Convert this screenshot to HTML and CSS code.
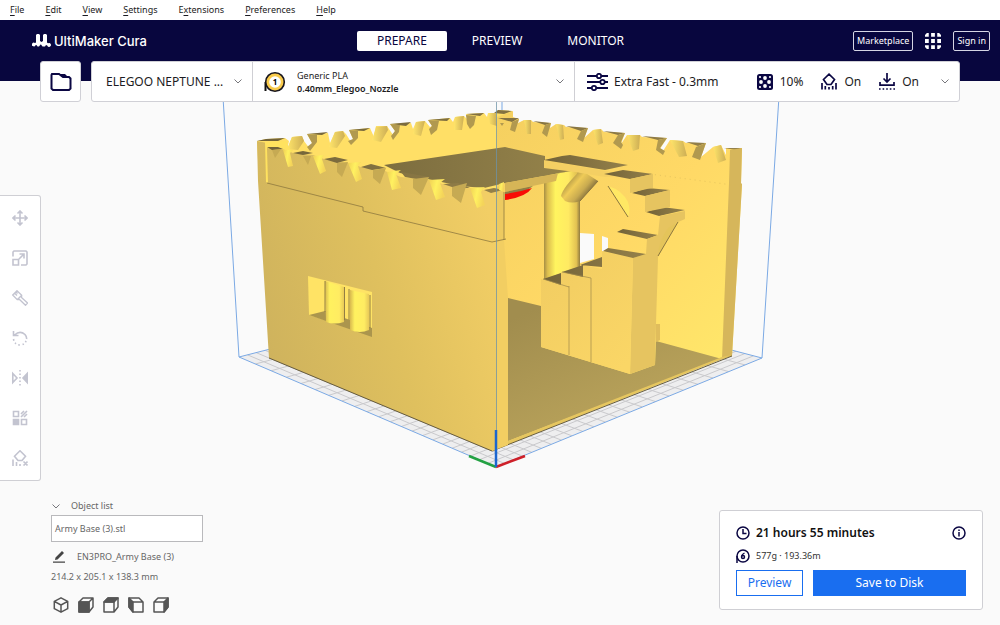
FILE: index.html
```html
<!DOCTYPE html>
<html lang="en">
<head>
<meta charset="utf-8">
<title>UltiMaker Cura</title>
<link rel="stylesheet" href="styles.css">
</head>
<body>
<nav class="menu" aria-label="Main menu">
  <button><u>F</u>ile</button><button><u>E</u>dit</button><button><u>V</u>iew</button><button><u>S</u>ettings</button><button>E<u>x</u>tensions</button><button><u>P</u>references</button><button><u>H</u>elp</button>
</nav>
<header class="top">
  <div class="brand">
    <svg width="19" height="13" viewBox="0 0 19 13" fill="#fff"><path d="M5 0h2l1 1v6l1.500 1L11 7V1l1-1h2l1 1v7.500l1 .8a1.900 1.900 0 1 1-.8 2.200l-1.200-.5-1 1.500h-2.500l-1.500-2H8.500l-1.500 2H5.500l-1-1.500-1 .3a1.900 1.900 0 1 1-.5-2.300L4 8.500V1z"/></svg>
    <span>UltiMaker Cura</span>
  </div>
  <div class="tabs">
    <button class="tab active">PREPARE</button><button class="tab">PREVIEW</button><button class="tab">MONITOR</button>
  </div>
  <div class="account">
    <button class="outline">Marketplace</button>
    <button class="apps" aria-label="Applications"><svg width="16" height="16" viewBox="0 0 17 17" fill="#fff"><path d="M2 0h2v4H0V2zM6.500 0h4v4h-4zM13 0h2l2 2v2h-4zM0 6.500h4v4H0zM6.500 6.500h4v4h-4zM13 6.500h4v4h-4zM0 13h4v4H2l-2-2zM6.500 13h4v4h-4zM13 13h4v2l-2 2h-2z"/></svg></button>
    <button class="outline">Sign in</button>
  </div>
</header>

<main class="stage">
  <svg class="scene" viewBox="0 81 1000 544" role="img" aria-label="Army Base model on the build plate">
    <defs>
      <linearGradient id="face" gradientUnits="userSpaceOnUse" x1="260" y1="320" x2="500" y2="250"><stop offset="0" stop-color="#cfb35d"/><stop offset=".5" stop-color="#dfc05e"/><stop offset="1" stop-color="#f2ce65"/></linearGradient>
      <linearGradient id="roof" x1="0" x2="1"><stop offset="0" stop-color="#7c6d3f"/><stop offset="1" stop-color="#95834a"/></linearGradient>
      <linearGradient id="inner" gradientUnits="userSpaceOnUse" x1="500" y1="120" x2="735" y2="340"><stop offset="0" stop-color="#f5d060"/><stop offset=".55" stop-color="#ffd966"/><stop offset="1" stop-color="#ffe66a"/></linearGradient>
      <linearGradient id="stair" gradientUnits="userSpaceOnUse" x1="540" y1="280" x2="630" y2="360"><stop offset="0" stop-color="#f2cd62"/><stop offset="1" stop-color="#fad666"/></linearGradient>
      <linearGradient id="floor" gradientUnits="userSpaceOnUse" x1="510" y1="320" x2="560" y2="430"><stop offset="0" stop-color="#a18d4e"/><stop offset="1" stop-color="#b6a059"/></linearGradient>
      <linearGradient id="pillar" x1="0" x2="1"><stop offset="0" stop-color="#a78f45"/><stop offset=".1" stop-color="#dcbd4e"/><stop offset=".32" stop-color="#fff45f"/><stop offset=".68" stop-color="#ffea62"/><stop offset=".9" stop-color="#e3c252"/><stop offset="1" stop-color="#917b40"/></linearGradient>
      <linearGradient id="column" x1="0" x2="1"><stop offset="0" stop-color="#d8b94f"/><stop offset=".25" stop-color="#fff15f"/><stop offset=".75" stop-color="#ffec62"/><stop offset="1" stop-color="#e8c958"/></linearGradient>
      <linearGradient id="brace" gradientUnits="userSpaceOnUse" x1="568" y1="179" x2="588" y2="196"><stop offset="0" stop-color="#ab9345"/><stop offset=".35" stop-color="#efcb57"/><stop offset=".7" stop-color="#c8aa50"/><stop offset="1" stop-color="#7b693a"/></linearGradient>
      <linearGradient id="step" x1="0" x2="1"><stop offset="0" stop-color="#716238"/><stop offset="1" stop-color="#95814a"/></linearGradient>
      <linearGradient id="tooth" x1="0" x2="1" y2=".3"><stop offset="0" stop-color="#f0d055"/><stop offset=".5" stop-color="#fff160"/><stop offset="1" stop-color="#f4d45a"/></linearGradient>
      <linearGradient id="peg" x1="0" x2="1"><stop offset="0" stop-color="#ffe56a"/><stop offset="1" stop-color="#cdae55"/></linearGradient>
      <clipPath id="plate"><path d="M239 357 501 290 762 358 496 467z"/></clipPath>
    </defs>
    <path d="M239 357 501 290 762 358 496 467z" fill="#eeeeef"/>
    <g id="grid" clip-path="url(#plate)" stroke="#c9c9cc" stroke-width="1"></g>
    <path d="M239 357 501 290 762 358 496 467zM222 81 239 357M780 81 762 358M502 81V115" fill="none" stroke="#7ba9e4"/>

    <!-- back walls -->
    <path fill="#ffdf66" d="M257 141 266 139 285 138 289 141 287 150 292 137 302 136 304 141 310 149 312 143 307 134 328 133 330 143 335 132 343 131 346 134 351 142 353 139 349 130 370 128 374 137 376 126 387 126 393 135 395 131 390 124 411 123 413 129 416 122 425 121 430 127 432 126 428 120 450 118 453 122 455 117 464 116 468 120 466 114 484 113 487 117 488 113 497 113 498 110 512 111 513 117 515 180 500 260 270 240 258 160z"/>
    <path fill="url(#inner)" d="M497 117 513 111 513 117 519 119 518 123 524 120 531 120 533 122 551 123 550 128 556 124 564 125 566 127 588 128 584 138 593 130 601 129 604 132 625 133 621 144 627 135 640 135 642 137 667 138 660 149 663 151 670 140 683 141 686 143 706 143 701 157 713 147 721 145 726 155 726 148 742 148 741 184 742 184 732 356 722 359 492 451 497 190z"/>
    <path fill="url(#step)" d="M257 141 266 139 285 138 278 141zM307 134 328 132 322 135zM349 130 370 128 364 131zM390 124 411 122 406 126zM428 120 450 118 447 121zM466 114 484 113 480 116zM494 113 498 110 512 111 504 114zM498 118 519 118 512 122zM533 121 551 123 545 125zM566 126 588 128 581 131zM603 131 625 133 618 135zM642 136 667 138 658 140zM686 142 706 143 698 146zM724 148 742 148 736 150z"/>
    <path fill="#b1994f" d="M307 134 317 135 317 142 310 151 307 147 312 143zM349 130 358 131 358 138 351 145 348 141 353 139zM390 124 400 125 399 132 393 140 391 136 395 131zM428 120 439 121 437 130 431 135 429 129 432 126zM466 115 476 116 474 125 470 129 467 124zM512 122 519 119 515 132 510 130zM545 125 551 123 547 137 542 133zM581 131 588 128 583 142 577 139zM618 135 625 133 621 142 623 145 621 149 613 143zM658 140 667 138 660 148 665 151 663 155 656 150zM696 147 706 143 700 160 692 157zM500 123 504 123 502 126z"/>
    <g fill="url(#peg)"><path d="M292 137 302 136 304 141 298 150 287 149z"/><path d="M335 132 343 131 345 136 337 148 329 147z"/><path d="M376 127 387 126 388 130 381 142 372 140z"/><path d="M416 122 425 121 421 136 413 134z"/><path d="M455 117 464 116 462 130 454 130z"/><path d="M488 113 496 113 497 126 490 124z"/><path d="M524 120 531 120 531 134 527 134z"/><path d="M556 124 563 125 564 139 560 140z"/><path d="M593 130 601 129 603 143 598 145z"/><path d="M627 135 640 135 639 149 633 151z"/><path d="M670 140 683 141 687 156 679 157z"/><path d="M713 147 721 145 726 160 718 163z"/></g>
    <path fill="#d6b65b" d="M730 150 742 148 741 183 742 184 732 356 722 359 729 183z"/>
    <path d="M650 174 740 186" stroke="#d9b95a" stroke-dasharray="1 4" opacity=".6"/>

    <!-- interior -->
    <path fill="url(#floor)" d="M508 298 541 306 541 347 630 374 655 365 656 341 722 359 508 441z"/>
    <path fill="#e6c65f" d="M508 441 722 357 732 355 492 451z"/>
    <path d="M492 451 732 356" stroke="#665b3c" fill="none"/>
    <path fill="#e0bd5c" d="M656 324h4v16l-4 2z"/>
    <path fill="#f2ce62" d="M497 189 504 190 504 240 508 298 508 445 492 451 496 240z"/>
    <path fill="#fafafa" d="M580 233 594 234V259L580 263zM602 236 608 238V249L602 252z"/>
    <path fill="url(#pillar)" d="M544 170H580V267L561 273 544 279z"/>
    <path fill="url(#brace)" d="M581 170 598 181 580 201Q572 204 565 201L561 196Q563 187 581 170z"/>
    <path fill="url(#roof)" d="M384 165 505 147 545 156 545 164 571 171 505 183 484 188 460 186 400 173z"/>
    <path fill="#d6b557" d="M505 183 571 171 558 173 556 181 505 192z"/>
    <path fill="#917d45" d="M505 192 533 186 526 191 505 198z"/><path fill="#f80d05" d="M505 194Q520 192 532 188 526 197 505 200z"/>
    <path fill="#f4cf63" d="M544 160 605 171 630 175 605 177 575 172 544 168z"/>
    <g fill="url(#step)"><path d="M544 160 562 156 570 155 628 165 605 170z"/><path d="M604 174 623 170 653 174 630 179z"/><path d="M632 193 647 188 670 190 645 196z"/><path d="M646 212 662 207 685 210 659 216z"/><path d="M617 232 623 229 658 235 647 239z"/></g>
    <path fill="#e6c460" d="M630 179 653 174V188L647 189 630 193zM645 196 670 190V207L645 212zM633 258 646 254 647 239 658 235 660 216 685 211 685 219 676 223 658 257 656 324 655 365 630 374z"/>
    <path fill="#ffe864" d="M608 186Q622 190 628 202 631 211 628 217z"/>
    <path fill="#e4c45a" d="M678 222 658 256Q658 242 668 228z"/>
    <path fill="none" stroke="#8b763f" d="M608 186 628 217M678 222 658 256M598 181 580 201"/>
    <path fill="url(#stair)" d="M541 279 561 284V272L583 277V265L602 269V251L633 258 630 374 541 347z"/>
    <path fill="url(#step)" d="M603 251 608 248 646 254 633 258zM580 265 602 257V267zM562 272 583 265V277zM543 279 561 273V285z"/>
    <path d="M569 286V355M591 278V362M562 272 591 278M543 279 569 287" stroke="#a18a4b" stroke-width=".7" fill="none"/>

    <!-- front left wall -->
    <path fill="url(#face)" d="M257 141 267 143 267 147 283 149 293 153 313 155 324 159 348 163 361 167 385 171 401 177 429 180 443 184 470 188 484 190 497 188 497 449 492 451 269 358 258 181z"/>
    <path fill="#edca60" d="M497 187 504 184 504 240 497 241z"/>
    <path fill="#ffe25f" d="M265 142 286 141 290 150 267 148 268 183 266 182z"/>
    <path fill="url(#step)" d="M267 147 278 147 283 149 272 150zM293 153 303 151 313 153 303 155zM324 159 335 157 348 160 337 163zM361 167 371 164 386 168 372 170zM401 172 429 177 422 180 405 177zM443 184 458 183 470 188 455 188zM484 190 494 188 503 190 491 193z"/>
    <path fill="#c6aa53" d="M272 150 281 149 275 158zM303 156 311 156 308 165zM337 163 348 162 342 177 337 172zM373 170 386 168 380 184 373 178zM413 179 429 177 421 195 413 188zM452 187 467 183 461 203 452 196z"/>
    <g fill="url(#tooth)"><path d="M283 150 293 150 290 153 293 166 288 167z"/><path d="M313 156 324 155 322 159 326 171 320 174z"/><path d="M348 163 361 162 358 166 362 179 356 182z"/><path d="M387 172 401 170 396 174 401 188 392 190z"/><path d="M429 180 445 179 440 183 445 197 436 200z"/><path d="M470 188 485 187 481 192 485 205 477 208z"/><path d="M499 184 504 182V192L499 190z"/></g>
    <path d="M267 183 363 207V211L492 242 506 239M504 192V240" fill="none" stroke="#8e783f" stroke-width=".8"/>
    <path d="M269 358 492 451" stroke="#665b3c"/>
    <!-- wall window -->
    <path fill="#ffe365" d="M308 276 372 292V335L309 315z"/>
    <path fill="#ab954d" d="M309 315 325 311 372 328 372 337z"/>
    <path fill="url(#column)" d="M325 281 344 287V322Q334 325 326 322z"/>
    <path fill="url(#column)" d="M350 290 369 294V330Q360 334 350 330z"/>
    <path d="M325 281V312M344.500 287V320M349 289V320M370 295V328" stroke="#927e43" stroke-width="1"/>
    <path d="M496.500 81V440" stroke="#6d93a8" opacity=".75"/>
    <path d="M469 456 496 467" stroke="#23a143" stroke-width="2.500"/><path d="M496 467 525 456" stroke="#ce2029" stroke-width="2.500"/><path d="M496 430V467" stroke="#1b66cf" stroke-width="2.500"/>
  </svg>

  <div class="toolbar">
    <button class="folder" aria-label="Open file"><svg width="22" height="18" viewBox="0 0 22 18" fill="none" stroke="#0b0743" stroke-width="2"><path d="M2 1h7l4 3h6l1.500 1.500v10L19 17H3l-1.500-1.500V2z"/><path d="M9 1h6l3 3h-6z" fill="#0b0743" stroke="none"/></svg></button>
    <div class="setup">
      <button class="cell printer"><span class="big">ELEGOO NEPTUNE ...</span><svg class="chev" viewBox="0 0 8 5"><path d="m.5.5 3.500 3.500L7.500.5"/></svg></button>
      <button class="cell material"><svg width="22" height="22" viewBox="0 0 22 22"><path d="M1.500 20V11" stroke="#111" stroke-width="2"/><circle cx="11" cy="11" r="9.300" fill="#f9cb4b" stroke="#17151e" stroke-width="1.600"/><circle cx="11" cy="11" r="5.800" fill="#fff"/><text x="11" y="14" text-anchor="middle" class="digit">1</text></svg><span class="stack"><span>Generic PLA</span><b>0.40mm_Elegoo_Nozzle</b></span><svg class="chev" viewBox="0 0 8 5"><path d="m.5.5 3.500 3.500L7.500.5"/></svg></button>
      <button class="cell settings">
        <svg width="21" height="18" viewBox="0 0 21 18" fill="none" stroke="#0b0743" stroke-width="1.800"><path d="M0 3h9.500M14.500 3H21M0 9h13M18 9h3M0 15h4.500M9.500 15H21"/><circle cx="12" cy="3" r="2.200"/><circle cx="15.500" cy="9" r="2.200"/><circle cx="7" cy="15" r="2.200"/></svg>
        <span class="big profile">Extra Fast - 0.3mm</span>
        <span class="stat"><svg width="16" height="16" viewBox="0 0 16 16"><rect width="16" height="16" rx="2.500" fill="#0b0743"/><g fill="#fff"><circle cx="8" cy="4" r="1.900"/><circle cx="4" cy="8" r="1.900"/><circle cx="12" cy="8" r="1.900"/><circle cx="8" cy="12" r="1.900"/><circle cx="3" cy="3" r="1.100"/><circle cx="13" cy="3" r="1.100"/><circle cx="3" cy="13" r="1.100"/><circle cx="13" cy="13" r="1.100"/></g></svg><span>10%</span></span>
        <span class="stat"><svg width="16" height="17" viewBox="0 0 16 17" fill="none" stroke="#0b0743" stroke-width="1.700"><path d="m8 1.200 5.500 5.300L10 11.500H6L2.500 6.500zM1 10v6.500M15 10v6.500M4.300 13v3.500M8 14v2.500M11.700 13v3.500"/></svg><span>On</span></span>
        <span class="stat"><svg width="16" height="17" viewBox="0 0 16 17" fill="none" stroke="#0b0743" stroke-width="1.700"><path d="M8 0v9M4.500 5.500 8 9l3.500-3.500M1 9v3.200h14V9"/><path d="M0 16h16" stroke-dasharray="1.600 2"/></svg><span>On</span></span>
        <svg class="chev" viewBox="0 0 8 5"><path d="m.5.5 3.500 3.500L7.500.5"/></svg>
      </button>
    </div>
  </div>

  <div class="tools" role="toolbar" aria-label="Model tools">
    <button aria-label="Move"><svg viewBox="0 0 16 16"><path d="M8 1v14M1 8h14M5.500 3.500 8 1l2.500 2.500M5.500 12.500 8 15l2.500-2.500M3.500 5.500 1 8l2.500 2.500M12.500 5.500 15 8l-2.500 2.500"/></svg></button>
    <button aria-label="Scale"><svg viewBox="0 0 16 16"><path d="M1 6.500V2l1-1h12l1 1v12l-1 1H9M1 9.500h5.500V15H1zM7 9l5-5M7.500 4H12v4.500"/></svg></button>
    <button aria-label="Paint"><svg viewBox="0 0 16 16"><path d="M5 .7 9.700 5.200 9.500 7.500 15.500 13l-2 2.300L7.500 9.500 5.200 9.700.7 5zM2.500 3l2.500 2.500M4 2l1.500 1.500M9.700 5.200 5.200 9.700" stroke-width="1.300"/></svg></button>
    <button aria-label="Rotate"><svg viewBox="0 0 16 16"><path d="M2.500 5Q8 0 13 4.500 15 7 14.500 9M1.500 1v4.500h5"/><path d="M1.500 9q1 6 6.500 6t6.500-6" stroke-dasharray="1.500 2.500"/></svg></button>
    <button aria-label="Mirror"><svg viewBox="0 0 16 16"><path d="M.8 3.500v9L5 8z"/><path d="M15.200 3.500v9L11 8z" fill="#c3c4d0"/><path d="M8 0v16" stroke-dasharray="1.500 2"/></svg></button>
    <button aria-label="Per model settings"><svg viewBox="0 0 16 16"><path d="M1.500 1.500h5v5h-5zM9.500 9.500h5v5h-5z"/><path d="M1.500 9.500h5v5h-5z" fill="#c3c4d0"/><path d="m9 4 3-3M9 7l6-6M12 7l3-3"/></svg></button>
    <button aria-label="Support blocker"><svg viewBox="0 0 16 16"><path d="m8 .8 5.500 5.400L10 10.500H6L2.500 6.200zM1 9.500V16M4.500 12v4M8 14v2M11.500 11.500l4 4M15.500 11.500l-4 4"/></svg></button>
  </div>

  <div class="bottom">
    <section class="objects">
      <button class="listhead"><svg class="chev" viewBox="0 0 8 5"><path d="m.5.5 3.500 3.500L7.500.5"/></svg><span>Object list</span></button>
      <button class="item">Army Base (3).stl</button>
      <div class="job"><button aria-label="Rename job"><svg width="12" height="12" viewBox="0 0 12 12" fill="#444"><path d="M9 0 11 2 4.500 8.500 2 9l.5-2.500zM0 10.500h12v1.200H0z"/></svg></button><span>EN3PRO_Army Base (3)</span></div>
      <p>214.2 x 205.1 x 138.3 mm</p>
      <div class="views">
        <button aria-label="3D view"><svg viewBox="0 0 16 16"><path d="m8 .8 6.700 3.500v7.400L8 15.200l-6.700-3.500V4.300zM1.300 4.300 8 8l6.700-3.700M8 8v7"/></svg></button>
        <button aria-label="Front view"><svg viewBox="0 0 16 16"><path d="M1 5 5 1h10v9l-4 5H1zM11 5l4-4M1 5h10v10"/><path d="M1 5h10v10H1z" fill="#555"/></svg></button>
        <button aria-label="Top view"><svg viewBox="0 0 16 16"><path d="M1 5 5 1h10v9l-4 5H1zM1 5h10v10"/><path d="M1 5 5 1h10l-4 4z" fill="#555"/></svg></button>
        <button aria-label="Left view"><svg viewBox="0 0 16 16"><path d="M1 1h10l4 4v10H5l-4-5zM5 5h10"/><path d="m1 1 4 4v10l-4-5z" fill="#555"/></svg></button>
        <button aria-label="Right view"><svg viewBox="0 0 16 16"><path d="M1 5 5 1h10v9l-4 5H1zM1 5h10"/><path d="m11 5 4-4v9l-4 5z" fill="#555"/></svg></button>
      </div>
    </section>
    <section class="card">
      <div class="line"><svg width="14" height="14" viewBox="0 0 14 14" fill="none" stroke="#0b0743" stroke-width="1.500"><circle cx="7" cy="7" r="6"/><path d="M7 3v4.500h3.500"/></svg><strong>21 hours 55 minutes</strong><button class="info" aria-label="Details"><svg width="14" height="14" viewBox="0 0 14 14" fill="none" stroke="#0b0743" stroke-width="1.500"><circle cx="7" cy="7" r="6"/><path d="M7 6v4.500M7 3.500V5"/></svg></button></div>
      <div class="line small"><svg width="14" height="14" viewBox="0 0 14 14" fill="none" stroke="#0b0743" stroke-width="1.500"><path d="M1 14V7"/><circle cx="7" cy="7" r="6"/><circle cx="7" cy="8" r="1.500"/><path d="M5.500 8q0-2.500 3-4" stroke-width="1.200"/></svg><span>577g · 193.36m</span></div>
      <div class="actions"><button class="preview">Preview</button><button class="save">Save to Disk</button></div>
    </section>
  </div>
</main>
<script src="grid.js"></script>
</body>
</html>
```
FILE: styles.css
```css
* { box-sizing: border-box; }
body { margin: 0; min-height: 100vh; display: flex; flex-direction: column; background: #fafafa; color: #1c1b22; font: 9px/14px "Noto Sans", sans-serif; }
button { margin: 0; padding: 0; border: 0; background: none; color: inherit; font: inherit; display: flex; align-items: center; }
svg { display: block; flex: none; }
p { margin: 0; }
.menu { display: flex; gap: 21px; height: 20px; padding: 0 10px; background: #fff; }
.menu button { display: block; }
.menu u { text-underline-offset: 2px; }
.top { display: grid; grid-template-columns: 1fr auto 1fr; align-items: center; height: 61px; padding: 0 10px 20px 32px; background: #08063e; color: #fff; }
.brand { display: flex; align-items: center; gap: 3px; font: 500 13px/20px Inter, sans-serif; }
.tabs { display: flex; gap: 5px; margin-left: -21px; }
.tab { height: 20px; padding: 0 20px; border-radius: 2px; font-size: 12px; }
.tab.active { background: #fff; color: #08063e; }
.account { display: flex; justify-content: flex-end; align-items: center; gap: 12px; }
.outline { height: 20px; padding: 0 3px; border: 1px solid #d5d5e4; border-radius: 2px; }

.stage { position: relative; flex: 1; display: flex; flex-direction: column; }
.scene { position: absolute; inset: 0; width: 100%; height: 100%; }
.toolbar { position: relative; display: flex; gap: 10px; height: 41px; margin: -20px 40px 0; }
.folder, .setup { background: #fff; border: 1px solid #d0d0d6; border-radius: 3px; }
.folder { width: 41px; justify-content: center; }
.setup { flex: 1; display: grid; grid-template-columns: 160fr 322fr 385fr; }
.cell { min-width: 0; white-space: nowrap; }
.cell + .cell { border-left: 1px solid #cfcfd4; }
.printer { padding: 0 10px 0 14px; }
.material { padding: 0 10px 0 11px; gap: 11px; }
.settings { padding: 0 10px 0 12px; }
.big, .stat { font-size: 12px; line-height: 18px; }
.profile { margin: 0 auto 0 6px; }
.stat { display: flex; align-items: center; gap: 7px; margin-right: 18px; }
.stack { display: flex; flex-direction: column; text-align: left; line-height: 13px; }
.stack b { font-weight: 600; }
.digit { font: 700 8px "Noto Sans", sans-serif; }
.chev { width: 8px; height: 5px; margin-left: auto; fill: none; stroke: #77777c; }
.settings .chev { margin-left: 4px; }

.tools { position: relative; align-self: flex-start; display: flex; flex-direction: column; gap: 24px; margin-top: 93px; padding: 14px 12px; background: #fff; border: 1px solid #cfcfd4; border-left: 0; border-radius: 0 3px 3px 0; }
.tools svg { width: 16px; height: 16px; fill: none; stroke: #c3c4d0; stroke-width: 1.6px; }

.bottom { position: relative; display: flex; justify-content: space-between; align-items: flex-end; margin-top: auto; padding: 0 17px 12px 51px; }
.objects { width: 152px; color: #666; }
.listhead { gap: 11px; height: 14px; padding-left: 1px; }
.listhead .chev { margin: 0; }
.item { width: 100%; height: 27px; margin-top: 2px; padding: 0 3px; background: #fff; border: 1px solid #b9b9bc; }
.job { display: flex; align-items: center; gap: 12px; margin: 8px 0 6px 2px; white-space: nowrap; }
.views { display: flex; gap: 9px; margin-top: 13px; padding-left: 2px; }
.views svg { width: 16px; height: 16px; fill: none; stroke: #555; stroke-width: 1.5px; stroke-linejoin: round; }
.card { width: 264px; margin-bottom: 3px; padding: 13px 16px; background: #fff; border: 1px solid #cfcfd4; border-radius: 3px; }
.line { display: flex; align-items: center; gap: 6px; height: 18px; color: #111; }
.line strong { font-size: 12px; font-weight: 600; }
.line .info { margin-left: auto; }
.line.small { margin-top: 5px; color: #333; }
.actions { display: flex; gap: 10px; margin-top: 5px; }
.actions button { height: 26px; justify-content: center; border: 1px solid #196ef0; font-size: 12px; color: #196ef0; }
.preview { width: 67px; }
.actions .save { flex: 1; background: #196ef0; color: #fff; }
```
FILE: grid.js
```js
const corners = { left: [239, 357], back: [501, 290], right: [762, 358], front: [496, 467] };
const grid = document.getElementById("grid");
const cells = 22;

function along(a, b, t) {
  return [a[0] + (b[0] - a[0]) * t, a[1] + (b[1] - a[1]) * t];
}

function rule(p, q) {
  const line = document.createElementNS("http://www.w3.org/2000/svg", "line");
  line.setAttribute("x1", p[0]);
  line.setAttribute("y1", p[1]);
  line.setAttribute("x2", q[0]);
  line.setAttribute("y2", q[1]);
  grid.append(line);
}

for (let i = 1; i < cells; i++) {
  const s = i / cells;
  const t = s / (s + (1 - s) * 0.7);
  const near = 1 - t;
  rule(along(corners.front, corners.left, near), along(corners.right, corners.back, near));
  rule(along(corners.front, corners.right, near), along(corners.left, corners.back, near));
}
```
